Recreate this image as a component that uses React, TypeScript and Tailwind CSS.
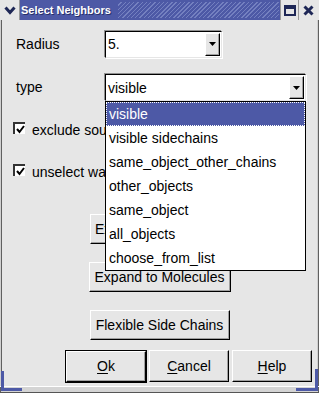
import React from "react";

const raised =
  "bg-[#e6e6e6] border border-t-white border-l-white border-r-black border-b-black shadow-[inset_-1px_-1px_0_#a0a0a0]";

function ArrowButton() {
  return (
    <div className={`${raised} w-[15px] h-[23px] flex items-center justify-center`}>
      <svg width="7" height="4" viewBox="0 0 7 4">
        <polygon points="0,0 7,0 3.5,4" fill="#000" />
      </svg>
    </div>
  );
}

function Combo({ value, width }: { value: string; width: string }) {
  return (
    <div
      className={`${width} h-[27px] bg-white border border-t-black border-l-black border-r-[#e6e6e6] border-b-[#e6e6e6] shadow-[-1px_-1px_0_#909090,1px_1px_0_#fff] flex items-center justify-between pl-[2px] pr-[1px]`}
    >
      <span className="leading-none">{value}</span>
      <ArrowButton />
    </div>
  );
}

// the open list covers the right part of these rows, so they are cut at the list's left edge
function Check({ label }: { label: string }) {
  return (
    <div className="w-[103px] overflow-hidden h-[16px] flex items-center pl-[11px] gap-[7px]">
      <div className="shrink-0 w-[12px] h-[12px] bg-white border-t-2 border-l-2 border-t-[#333] border-l-[#333] flex items-center justify-center">
        <svg width="9" height="9" viewBox="0 0 9 9">
          <polyline points="1,4 3.5,7 8,1" fill="none" stroke="#000" strokeWidth="2" />
        </svg>
      </div>
      <span className="mt-[4px] whitespace-nowrap">{label}</span>
    </div>
  );
}

function Btn({ children, width }: { children: React.ReactNode; width: string }) {
  return (
    <div className={`${raised} ${width} h-[30px] mx-auto flex items-center justify-center whitespace-nowrap`}>
      {children}
    </div>
  );
}

const items = [
  "visible",
  "visible sidechains",
  "same_object_other_chains",
  "other_objects",
  "same_object",
  "all_objects",
  "choose_from_list",
];

export default function App() {
  return (
    <div className="w-[319px] h-[393px] bg-[#e6e6e6] flex flex-col relative overflow-hidden text-[14px] text-black font-['Liberation_Sans',Arial,sans-serif]">
      {/* Title bar */}
      <div className="h-[20px] flex bg-[#e6e6e6]">
        <div className="w-[20px] h-[20px] flex items-center justify-center border-r border-[#9a9a9a]">
          <svg width="12" height="9" viewBox="0 0 12 9">
            <polyline points="1.5,1.5 6,6.5 10.5,1.5" fill="none" stroke="#1e2756" strokeWidth="3" />
          </svg>
        </div>
        <div className="flex-1 flex items-center bg-[#4d59a6]">
          <span className="pl-[1px] pr-[7px] text-white font-bold text-[11px] [text-shadow:1px_1px_0_#27306a] whitespace-nowrap">
            Select Neighbors
          </span>
          <div className="flex-1 h-[16px] mr-[1px] bg-[repeating-linear-gradient(135deg,#4d59a6_0px,#4d59a6_2px,#7480c0_2px,#7480c0_3px)]" />
        </div>
        <div className="w-[18px] h-[20px] flex items-center justify-center border-l border-[#9a9a9a]">
          <svg width="12" height="11" viewBox="0 0 12 11">
            <rect x="1" y="1" width="10" height="9" fill="none" stroke="#1e2756" strokeWidth="2" />
            <rect x="1" y="1" width="10" height="3" fill="#1e2756" />
          </svg>
        </div>
        <div className="w-[19px] h-[20px] flex items-center justify-center border-l border-[#9a9a9a] mr-[2px]">
          <svg width="11" height="11" viewBox="0 0 11 11">
            <path d="M1.5 1.5 L9.5 9.5 M9.5 1.5 L1.5 9.5" stroke="#1e2756" strokeWidth="3" />
          </svg>
        </div>
      </div>

      {/* Body */}
      <div className="flex-1 flex flex-col shadow-[inset_1px_0_0_#d0d0d0,inset_2px_0_0_#606060,inset_-1px_0_0_#606060,inset_-2px_0_0_#d0d0d0] pl-[2px] pr-[2px]">
        <div className="mt-[11px] h-[26px] flex items-center">
          <span className="w-[103px] pl-[14px]">Radius</span>
          <Combo value="5." width="w-[117px]" />
        </div>

        <div className="mt-[17px] h-[27px] flex items-center">
          <span className="w-[103px] pl-[14px]">type</span>
          <div className="relative">
            <Combo value="visible" width="w-[201px]" />
            <div className="absolute left-0 top-[27px] w-[201px] bg-white border border-black z-10">
              {items.map((it, i) => (
                <div
                  key={it}
                  className={
                    i === 0
                      ? "h-[24px] flex items-center px-[2px] bg-[#4d59a6] text-white border border-dotted border-white"
                      : "h-[24px] flex items-center px-[3px]"
                  }
                >
                  {it}
                </div>
              ))}
            </div>
          </div>
        </div>

        <div className="mt-[19px]">
          <Check label="exclude source residues" />
        </div>
        <div className="mt-[26px]">
          <Check label="unselect water molecules" />
        </div>

        <div className="mt-[36px] w-[103px] overflow-hidden">
          <div className={`${raised} ml-[88px] w-[138px] h-[30px] flex items-center pl-[4px] whitespace-nowrap`}>
            Expand to Residues
          </div>
        </div>
        <div className="mt-[18px]">
          <Btn width="w-[142px]">Expand to Molecules</Btn>
        </div>
        <div className="mt-[18px]">
          <Btn width="w-[140px]">Flexible Side Chains</Btn>
        </div>

        <div className="mt-[10px] h-[33px] flex pl-[63px]">
          <div className="w-[82px] h-[33px] border border-black">
            <div className={`${raised} w-full h-full flex items-center justify-center`}>
              <span className="underline underline-offset-2">O</span>k
            </div>
          </div>
          <div className={`${raised} ml-[2px] w-[80px] h-[32px] flex items-center justify-center`}>
            <span className="underline underline-offset-2">C</span>ancel
          </div>
          <div className={`${raised} ml-[3px] w-[80px] h-[32px] flex items-center justify-center`}>
            <span className="underline underline-offset-2">H</span>elp
          </div>
        </div>
      </div>

      {/* Bottom frame */}
      <div className="h-[7px] bg-[#d4d4d4] border-t border-t-white border-b border-b-[#555] shadow-[inset_1px_0_0_#606060,inset_-1px_0_0_#606060]" />

      {/* Frame corner accents */}
      <div className="absolute left-[1px] bottom-[2px] w-[3px] h-[20px] bg-[#4d59a6]" />
      <div className="absolute left-[1px] bottom-[2px] w-[21px] h-[3px] bg-[#4d59a6]" />
      <div className="absolute right-[1px] bottom-[2px] w-[3px] h-[22px] bg-[#4d59a6]" />
      <div className="absolute right-[1px] bottom-[2px] w-[22px] h-[3px] bg-[#4d59a6]" />
    </div>
  );
}
